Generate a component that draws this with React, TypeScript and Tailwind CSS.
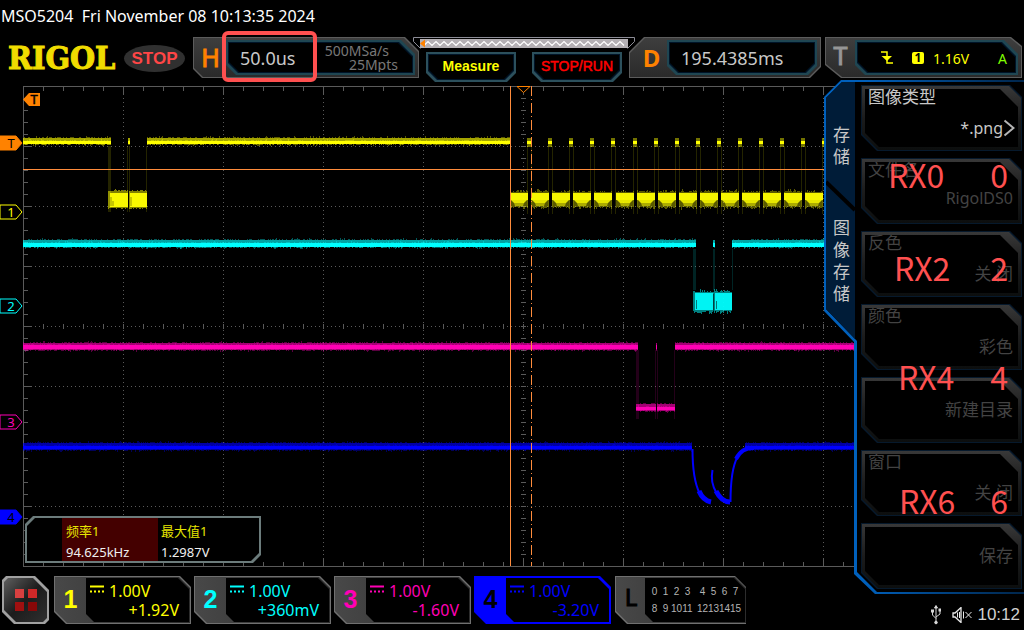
import type { ReactNode } from "react";

const SANS = "font-['Noto_Sans','Noto_Sans_CJK_SC',sans-serif]";
const ARIAL = "font-['Liberation_Sans',Arial,sans-serif]";

/* ---------- deterministic noise helpers for the traces ---------- */

function makeRandom(seed: number) {
  let s = seed;
  return () => {
    s = (s * 1103515245 + 12345) % 2147483648;
    return s / 2147483648;
  };
}

function fuzz(x0: number, x1: number, top: number, bottom: number, reach: number, seed: number) {
  const rnd = makeRandom(seed);
  let d = "";
  for (let x = x0; x < x1; x += 1) {
    const a = Math.round(rnd() * rnd() * reach);
    const b = Math.round(rnd() * rnd() * reach);
    d += `M${x + 0.5} ${top - a}V${bottom + b}`;
  }
  return d;
}

type BandProps = { x0: number; x1: number; y: number; h: number; core: number; coreH: number; color: string; seed: number };

function Band({ x0, x1, y, h, core, coreH, color, seed }: BandProps) {
  return (
    <g>
      <path d={fuzz(x0, x1, y, y + h, 2, seed)} stroke={color} strokeOpacity={0.35} />
      <rect x={x0} y={y} width={x1 - x0} height={h} fill={color} fillOpacity={0.45} />
      <path d={fuzz(x0, x1, core, core + coreH, 2, seed + 7)} stroke={color} strokeOpacity={0.35} />
      <rect x={x0} y={core} width={x1 - x0} height={coreH} fill={color} />
    </g>
  );
}

function Edges({ xs, y0, y1, color }: { xs: number[]; y0: number; y1: number; color: string }) {
  return <path d={xs.map((x) => `M${x + 0.5} ${y0}V${y1}`).join("")} stroke={color} strokeOpacity={0.14} />;
}

/* ---------- graticule ---------- */

function range(n: number) {
  return Array.from({ length: n }, (_, i) => i);
}

function Graticule() {
  const cols = range(9).map((i) => (i + 1) * 100);
  const rows = range(7).map((i) => (i + 1) * 60);
  const xs = range(51).map((i) => i * 20);
  const ys = range(41).map((i) => i * 12);
  return (
    <g stroke="#5a5a5a" fill="none">
      <path d={cols.map((x) => `M${x + 0.5} 0V480`).join("")} strokeDasharray="1 3" />
      <path d={rows.map((y) => `M0 ${y + 0.5}H1000`).join("")} strokeDasharray="1 3" />
      <rect x={0.5} y={0.5} width={1000} height={480} />
      <path d={xs.map((x) => `M${x + 0.5} 0v${x % 100 ? 5 : 8}M${x + 0.5} 480v${x % 100 ? -4 : -7}M${x + 0.5} 238v5`).join("")} />
      <path d={ys.map((y) => `M0 ${y + 0.5}h${y % 60 ? 5 : 8}M498 ${y + 0.5}h5`).join("")} />
    </g>
  );
}

/* ---------- traces ---------- */

const YELLOW = "#ffff00";
const CYAN = "#00ffff";
const MAGENTA = "#ff00b4";
const BLUE = "#0000ff";
const ORANGE = "#ff8c3c";

function TraceOne() {
  const starts = range(15).map((i) => Math.round(487 + i * 21.1));
  return (
    <g>
      <Edges xs={[85, 86, 87, 104, 106, 123]} y0={60} y1={126} color={YELLOW} />
      <Band x0={0} x1={88} y={52} h={6} core={55} coreH={3} color={YELLOW} seed={11} />
      <Band x0={105} x1={107} y={52} h={6} core={55} coreH={3} color={YELLOW} seed={3} />
      <Band x0={124} x1={487} y={52} h={6} core={55} coreH={3} color={YELLOW} seed={29} />
      <path d={fuzz(85, 105, 105, 122, 2, 5)} stroke={YELLOW} strokeOpacity={0.5} />
      <path d={fuzz(106, 124, 105, 122, 2, 6)} stroke={YELLOW} strokeOpacity={0.5} />
      <rect x={87} y={107} width={18} height={14} fill={YELLOW} fillOpacity={0.95} />
      <rect x={107} y={107} width={17} height={14} fill={YELLOW} fillOpacity={0.95} />
      <path d="M88 111v9M108 111v9M90 115v5" stroke="#000" strokeOpacity={0.4} />
      {starts.map((x, i) => (
        <g key={x}>
          <Edges xs={[x + 17, x + 21]} y0={60} y1={128} color={YELLOW} />
          <path d={fuzz(x, x + 18, 106, 121, 3, i * 13 + 5)} stroke={YELLOW} strokeOpacity={0.35} />
          <rect x={x} y={107} width={18} height={7} fill={YELLOW} fillOpacity={0.95} />
          <path d={`M${x + 1} 114h16l-3 3h-10z`} fill={YELLOW} fillOpacity={0.85} />
          <path d={`M${x + 4} 117h10l-1 3h-8z`} fill={YELLOW} fillOpacity={0.5} />
          <rect x={x + 17} y={52} width={4} height={9} fill={YELLOW} fillOpacity={0.45} />
          <rect x={x + 17} y={55} width={4} height={3} fill={YELLOW} />
        </g>
      ))}
    </g>
  );
}

function TraceTwo() {
  return (
    <g>
      <Edges xs={[670, 671, 672, 690, 691, 709]} y0={163} y1={204} color={CYAN} />
      <Band x0={0} x1={673} y={154} h={7} core={157} coreH={4} color={CYAN} seed={41} />
      <Band x0={690} x1={692} y={154} h={7} core={157} coreH={4} color={CYAN} seed={8} />
      <Band x0={709} x1={832} y={154} h={7} core={157} coreH={4} color={CYAN} seed={57} />
      <path d={fuzz(670, 709, 206, 225, 4, 17)} stroke={CYAN} strokeOpacity={0.5} />
      <rect x={672} y={207} width={18} height={17} fill={CYAN} fillOpacity={0.9} />
      <rect x={692} y={207} width={17} height={17} fill={CYAN} fillOpacity={0.9} />
      <path d="M673.5 214v9M690.5 208v18M693.5 215v8" stroke="#000" strokeOpacity={0.5} />
    </g>
  );
}

function TraceThree() {
  return (
    <g>
      <Edges xs={[613, 614, 615, 632, 634, 651]} y0={264} y1={333} color={MAGENTA} />
      <Band x0={0} x1={615} y={257} h={7} core={259} coreH={4} color={MAGENTA} seed={71} />
      <Band x0={633} x1={634} y={257} h={7} core={259} coreH={4} color={MAGENTA} seed={2} />
      <Band x0={652} x1={832} y={257} h={7} core={259} coreH={4} color={MAGENTA} seed={83} />
      <Band x0={613} x1={633} y={318} h={7} core={321} coreH={3} color={MAGENTA} seed={9} />
      <Band x0={634} x1={652} y={318} h={7} core={321} coreH={3} color={MAGENTA} seed={19} />
    </g>
  );
}

function TraceFour() {
  return (
    <g>
      <Band x0={0} x1={669} y={357} h={7} core={360} coreH={3} color={BLUE} seed={91} />
      <Band x0={722} x1={832} y={357} h={7} core={360} coreH={3} color={BLUE} seed={37} />
      <g fill="none" stroke={BLUE} strokeLinejoin="round">
        <path d="M669.5 363c0 22 3 36 7 44" strokeWidth={2} />
        <path d="M676 405c3 7 7 10 12 11" strokeWidth={5} />
        <path d="M689.5 384c-2 10 1 18 4 23" strokeWidth={2} />
        <path d="M693 405c4 8 8 11 14 11" strokeWidth={5} />
        <path d="M707.5 416c0-24 2-36 7-45" strokeWidth={2} />
        <path d="M713 373c4-8 9-11 18-11" strokeWidth={4} />
      </g>
    </g>
  );
}

type MarkerProps = { y: number; label: string; color: string; solid?: boolean };

function Marker({ y, label, color, solid }: MarkerProps) {
  return (
    <g>
      <path d={`M-23 ${y - 7}h16l6 7l-6 7h-16z`} fill={solid ? color : "#000"} stroke={color} />
      <text x={-12} y={y + 5} textAnchor="middle" className={`${SANS} text-[13px]`} fill={solid ? "#000" : color}>
        {label}
      </text>
    </g>
  );
}

function Scope() {
  return (
    <svg
      className="block h-[490px] w-full"
      viewBox="0 0 1024 490"
      preserveAspectRatio="xMinYMin slice"
      role="img"
      aria-label="Waveforms"
    >
      <g transform="translate(23 4)">
        <Graticule />
        <TraceOne />
        <TraceTwo />
        <TraceThree />
        <TraceFour />
        <path d="M0 83.5H1000" stroke={ORANGE} />
        <path d="M487.5 0V480" stroke={ORANGE} />
        <path d="M508.5 0V480" stroke={ORANGE} strokeDasharray="10 3 1 3" />
        <path d="M494 0.5h13l-6.500 6z" fill="#000" stroke="#ff8200" />
        <path d="M0 13.500l6-6.500h11v13h-11z" fill="#ff8200" />
        <text x={11} y={18} textAnchor="middle" className={`${SANS} text-[13px]`} fill="#000" stroke="#000" strokeWidth={0.5}>
          T
        </text>
        <Marker y={57} label="T" color="#ff8200" solid />
        <Marker y={126} label="1" color={YELLOW} />
        <Marker y={220} label="2" color={CYAN} />
        <Marker y={336} label="3" color={MAGENTA} />
        <Marker y={431} label="4" color={BLUE} solid />
      </g>
    </svg>
  );
}

/* ---------- header ---------- */

const CUT_BL_TR_OUT =
  "[clip-path:polygon(0_0,calc(100%-14px)_0,100%_14px,100%_100%,9px_100%,0_calc(100%-9px))]";
const CUT_BL_TR_IN =
  "[clip-path:polygon(0_0,calc(100%-14px)_0,100%_14px,100%_100%,10px_100%,0_calc(100%-10px))]";
const CUT_TL_BR_OUT =
  "[clip-path:polygon(15px_0,100%_0,100%_calc(100%-11px),calc(100%-11px)_100%,0_100%,0_15px)]";
const CUT_BOTTOM =
  "[clip-path:polygon(0_0,100%_0,100%_calc(100%-9px),calc(100%-9px)_100%,9px_100%,0_calc(100%-9px))]";
const CUT_T_OUT =
  "[clip-path:polygon(0_0,calc(100%-11px)_0,100%_9px,100%_100%,16px_100%,0_calc(100%-13px))]";

type HeaderBoxProps = { mark: string; markClass: string; cut: string; innerCut: string; className: string; children: ReactNode };

function HeaderBox({ mark, markClass, cut, innerCut, className, children }: HeaderBoxProps) {
  return (
    <div className={`flex h-[41px] bg-[#5c5c5c] p-px ${cut} ${className}`}>
      <div className={`flex flex-1 bg-linear-to-b from-[#3e3e3e] to-[#2a2a2a] py-[2px] pr-[3px] ${cut}`}>
        <div className={`flex shrink-0 items-center justify-center ${markClass}`}>{mark}</div>
        <div className={`flex flex-1 bg-[#1f4652] p-[2px] ${innerCut}`}>
          <div className={`flex flex-1 bg-[#001428] p-px ${innerCut}`}>
            <div className={`flex flex-1 items-center bg-black ${innerCut}`}>{children}</div>
          </div>
        </div>
      </div>
    </div>
  );
}

function HeaderButton({ children, className }: { children: ReactNode; className: string }) {
  return (
    <button type="button" className={`flex h-[30px] flex-1 bg-[#2c505c] p-[2px] ${CUT_BOTTOM}`}>
      <span className={`flex h-full flex-1 bg-[#001428] p-px ${CUT_BOTTOM}`}>
        <span className={`flex flex-1 items-center justify-center bg-black pb-[2px] text-[14px] ${ARIAL} ${CUT_BOTTOM} ${className}`}>
          {children}
        </span>
      </span>
    </button>
  );
}

function MemoryStrip() {
  const wave = "M0 6" + range(25).map(() => "l4-4l4 4").join("");
  return (
    <svg className="-mx-[6px] block h-[12px] w-[222px]" viewBox="0 0 222 12" aria-hidden="true">
      <path d="M0.500 0.500h221v4l-7 7M0.500 0.500v4l7 7" fill="none" stroke="#8c8c96" />
      <rect x={7} y={2} width={208} height={9} fill="#b4b0b4" />
      <path d={wave} transform="translate(11 2.500)" fill="none" stroke="#fff" strokeWidth={1.2} />
      <path d="M7 6.500l5-4v8z" fill="#ff8200" />
    </svg>
  );
}

function Header() {
  return (
    <header className="flex h-[45px] items-start pl-2 pr-[2px]">
      <div className="w-[116px] shrink-0 font-['DejaVu_Serif_Condensed','DejaVu_Serif',serif] text-[32px] leading-[42px] font-bold text-[#f0dc00] [-webkit-text-stroke:1px_#f0dc00]">
        RIGOL
      </div>
      <div
        className={`mt-2 mr-2 flex h-[27px] w-[61px] shrink-0 items-center justify-center rounded-[50%] bg-[#303030] pt-px text-[17px] font-bold text-[#ff4646] ${ARIAL}`}
      >
        STOP
      </div>
      <div className="relative flex grow basis-[226px]">
        <HeaderBox
          mark="H"
          markClass={`w-8 pl-px text-[25px] text-[#ff8200] [-webkit-text-stroke:1px_#ff8200] ${SANS}`}
          cut={CUT_BL_TR_OUT}
          innerCut={CUT_BL_TR_IN}
          className="flex-1"
        >
          <span className="pt-[2px] pl-[11px] text-[18px] text-[#c8c8c8]">50.0us</span>
          <span className="ml-auto pr-[14px] text-right text-[14px] leading-[14px] text-[#787878]">
            <span className="block pr-[9px]">500MSa/s</span>
            <span className="block">25Mpts</span>
          </span>
        </HeaderBox>
        <div className="absolute -top-[6px] left-[29px] h-[51px] w-[95px] rounded-[6px] border-4 border-[#ff5050]" />
      </div>
      <div className="w-[210px] shrink-0">
        <MemoryStrip />
        <div className="mt-[3px] flex gap-4 px-[7px]">
          <HeaderButton className="font-bold text-[#ffff00]">Measure</HeaderButton>
          <HeaderButton className="text-[#ff0000] [-webkit-text-stroke:0.5px_#ff0000]">STOP/RUN</HeaderButton>
        </div>
      </div>
      <HeaderBox
        mark="D"
        markClass={`w-[37px] pl-[6px] text-[24px] font-bold text-[#ff8200] ${SANS}`}
        cut={CUT_TL_BR_OUT}
        innerCut={CUT_BOTTOM}
        className="mr-1 grow basis-[192px]"
      >
        <span className="pt-[2px] pl-[11px] text-[18px] text-[#c8c8c8]">195.4385ms</span>
      </HeaderBox>
      <HeaderBox
        mark="T"
        markClass={`w-[29px] pb-1 text-[25px] text-[#969696] [-webkit-text-stroke:1px_#969696] ${SANS}`}
        cut={CUT_T_OUT}
        innerCut={CUT_BL_TR_IN}
        className="grow basis-[197px]"
      >
        <span className="flex flex-1 items-center pr-[8px] pl-[23px] text-[14px] text-[#ffff00]">
          <svg className="h-[13px] w-[12px]" viewBox="0 0 12 13" aria-label="Falling edge">
            <path d="M0 1h6v5M6 8v4h6" fill="none" stroke="#ffff00" strokeWidth={1.5} />
            <path d="M0.500 5h10.500l-5 5z" fill="#ffff00" />
          </svg>
          <span className="ml-[19px] flex h-3 w-3 items-center justify-center rounded-[2px] bg-[#ffff00] text-[12px] leading-3 font-bold text-black">
            1
          </span>
          <span className="ml-[9px] pt-px">1.16V</span>
          <span className="ml-auto pt-px text-[#80ff00]">A</span>
        </span>
      </HeaderBox>
    </header>
  );
}

/* ---------- side menu ---------- */

const CARD_OUT =
  "[clip-path:polygon(0_0,calc(100%-12px)_0,100%_12px,100%_100%,16px_100%,0_calc(100%-16px))]";
const CARD_IN =
  "[clip-path:polygon(0_0,calc(100%-18px)_0,100%_18px,100%_100%,14px_100%,0_calc(100%-14px))]";

type Item = { label?: string; value: string; active?: boolean; latin?: boolean };

const ITEMS: Item[] = [
  { label: "图像类型", value: "*.png", active: true, latin: true },
  { label: "文件名", value: "RigolDS0", latin: true },
  { label: "反色", value: "关 闭" },
  { label: "颜色", value: "彩色" },
  { value: "新建目录" },
  { label: "窗口", value: "关 闭" },
  { value: "保存" },
];

function Card({ label, value, active, latin }: Item) {
  const tone = active ? "text-[#c8c8c8]" : "text-[#434343]";
  return (
    <button type="button" className={`flex h-[66px] w-full bg-[#06192c] p-px text-left text-[17px] ${CARD_OUT} ${tone}`}>
      <span className={`flex h-full flex-1 bg-linear-to-b from-[#383838] via-[#1c1c1c] to-[#0c0e0e] p-[3px] ${CARD_OUT}`}>
        <span className={`flex flex-1 flex-col bg-black pr-[5px] pl-[3px] ${label ? "" : "justify-center"} ${CARD_IN}`}>
          {label && <span className="block h-4 leading-4">{label}</span>}
          <span
            className={`flex items-center justify-end leading-5 ${latin ? "text-[16px]" : "text-[17px]"} ${
              label ? (latin && !active ? "mt-[10px]" : "mt-[13px]") : ""
            }`}
          >
            {value}
            {active && (
              <svg className="-mr-[2px] h-[18px] w-[12px]" viewBox="0 0 12 18" aria-hidden="true">
                <path d="M1.500 1.500l9 7.500l-9 7.500" fill="none" stroke="#b4b4b4" strokeWidth={2} />
              </svg>
            )}
          </span>
        </span>
      </span>
    </button>
  );
}

const PANEL_OUT =
  "[clip-path:polygon(0_17px,17px_0,100%_0,100%_100%,51px_100%,30px_calc(100%-20px),30px_262px,0_231px)]";
const PANEL_IN =
  "[clip-path:polygon(2px_18px,18px_2px,100%_2px,100%_calc(100%-2px),53px_calc(100%-2px),33px_calc(100%-22px),33px_261px,2px_229px)]";
const TAB_FILL =
  "[clip-path:polygon(2px_18px,18px_2px,100%_2px,100%_259px,2px_229px)]";

const NOTES = [
  { name: "RX0", n: "0", place: "top-[78px] left-[64px]" },
  { name: "RX2", n: "2", place: "top-[171px] left-[70px]" },
  { name: "RX4", n: "4", place: "top-[280px] left-[74px]" },
  { name: "RX6", n: "6", place: "top-[404px] left-[75px]" },
];

function SidePanel() {
  return (
    <aside className="relative z-10 col-start-1 row-start-1 -mt-[2px] flex w-[200px] flex-col justify-self-end">
      <div className="relative flex pt-[5px] pr-[2px] pb-[5px]">
        <div className={`absolute inset-0 bg-linear-to-r from-[#0060bc] from-20% to-[#00264c] ${PANEL_OUT}`} />
        <div className={`absolute inset-0 bg-black ${PANEL_IN}`} />
        <div className={`absolute inset-y-0 left-0 w-[31px] bg-[#001c38] ${TAB_FILL}`} />
        <svg className="absolute top-[100px] left-[2px] h-[32px] w-[29px]" viewBox="0 0 29 32" aria-hidden="true">
          <path d="M0 2L29 30" stroke="#000" strokeWidth={4} />
        </svg>
        <nav className="relative flex w-[37px] shrink-0 flex-col pl-[9px] text-[17px] leading-[22px] text-[#c8c8c8]">
          <a href="#storage" className="mt-[39px] block w-[17px]">
            存储
          </a>
          <a href="#image-storage" className="mt-[49px] block w-[17px]">
            图像存储
          </a>
        </nav>
        <div className="relative flex flex-1 flex-col gap-[7px]">
          {ITEMS.map((item, i) => (
            <Card key={i} {...item} />
          ))}
        </div>
        {NOTES.map((note) => (
          <div key={note.name} className={`absolute right-4 flex justify-between font-['Noto_Sans_CJK_SC',sans-serif] text-[32px] leading-8 text-[#ff5050] ${note.place}`}>
            <span>{note.name}</span>
            <span>{note.n}</span>
          </div>
        ))}
      </div>
      <div className="mt-[9px] flex items-center justify-end gap-2 pr-1 text-[#d0d0d0]">
        <svg className="mr-[3px] h-5 w-[10px]" viewBox="0 0 10 20" fill="none" stroke="#d8d8d8" aria-label="USB">
          <path d="M5 1v16M1.500 6v4l3.500 3.500M9 5v4L5 12" />
          <path d="M3.500 3L5 0.500L6.500 3z" fill="#d8d8d8" />
          <circle cx={5} cy={17.500} r={1.300} fill="#d8d8d8" />
          <rect x={0.500} y={5} width={2} height={2} fill="#d8d8d8" />
          <rect x={8} y={4} width={1.500} height={2} fill="#d8d8d8" />
        </svg>
        <svg className="-mr-[3px] h-4 w-5" viewBox="0 0 20 16" fill="none" stroke="#e8e8e8" aria-label="Muted">
          <path d="M1 6v4h2l6 5.500V0.500L3 6z" strokeWidth={1.300} />
          <path d="M11.500 4.500v7M5.500 5.500v5M7.500 5v6M13.500 5l6 6M19.500 5l-6 6" />
        </svg>
        <time className={`text-[17px] leading-6 ${ARIAL}`}>10:12</time>
      </div>
    </aside>
  );
}

/* ---------- measurements and channel bar ---------- */

const BOX_TL_BR =
  "[clip-path:polygon(8px_0,100%_0,100%_calc(100%-8px),calc(100%-8px)_100%,0_100%,0_8px)]";

function Measurements() {
  return (
    <div className={`absolute bottom-[9px] left-[25px] flex h-[47px] w-[236px] bg-[#6c7c7c] p-[2px] ${BOX_TL_BR}`}>
      <dl className={`flex flex-1 bg-black pl-[35px] text-[13px] leading-[21px] ${BOX_TL_BR}`}>
        <div className="w-24 bg-[#440000] pt-[3px] pl-1">
          <dt className="text-[#e6e600]">频率1</dt>
          <dd className="text-[#f0f0f0]">94.625kHz</dd>
        </div>
        <div className="pt-[3px] pl-[3px]">
          <dt className="text-[#e6e600]">最大值1</dt>
          <dd className="text-[#f0f0f0]">1.2987V</dd>
        </div>
      </dl>
    </div>
  );
}

const CH_OUT =
  "[clip-path:polygon(0_0,calc(100%-11px)_0,100%_11px,100%_100%,12px_100%,0_calc(100%-12px))]";
const CH_IN =
  "[clip-path:polygon(0_0,calc(100%-11px)_0,100%_11px,100%_100%,8px_100%,0_calc(100%-8px))]";

type Channel = { id: string; scale: string; offset: string; tone: string; idTone: string; rim: string; fill: string };

const GREY_FILL = "bg-linear-to-r from-[#484848] to-[#2c2c2c]";

const CHANNELS: Channel[] = [
  { id: "1", scale: "1.00V", offset: "+1.92V", tone: "text-[#ffff00]", idTone: "text-[#ffff00]", rim: "bg-[#707070]", fill: GREY_FILL },
  { id: "2", scale: "1.00V", offset: "+360mV", tone: "text-[#00ffff]", idTone: "text-[#00ffff]", rim: "bg-[#707070]", fill: GREY_FILL },
  { id: "3", scale: "1.00V", offset: "-1.60V", tone: "text-[#ff00b4]", idTone: "text-[#ff00b4]", rim: "bg-[#707070]", fill: GREY_FILL },
  { id: "4", scale: "1.00V", offset: "-3.20V", tone: "text-[#0000ff]", idTone: "text-black", rim: "bg-[#0000ff]", fill: "bg-[#0000ff]" },
];

function ChannelButton({ id, scale, offset, tone, idTone, rim, fill }: Channel) {
  return (
    <button type="button" className={`flex h-12 w-[137px] p-px text-left ${rim} ${CH_OUT}`}>
      <span className={`flex h-full flex-1 py-px pr-px ${fill} ${CH_OUT}`}>
        <span className={`flex w-[31px] items-center justify-center text-[25px] font-bold ${ARIAL} ${idTone}`}>{id}</span>
        <span className={`flex flex-1 flex-col justify-center bg-black pt-[2px] pr-[10px] pl-1 text-[16px] leading-[19px] ${CH_IN} ${tone}`}>
          <span className="flex items-center gap-[5px]">
            <svg className="mb-[5px] h-2 w-[14px]" viewBox="0 0 14 8" stroke="currentColor" aria-label="DC coupling">
              <path d="M0 1.500h14" strokeWidth={2} />
              <path d="M0 6.500h14" strokeDasharray="2 2" strokeWidth={2} />
            </svg>
            {scale}
          </span>
          <span className="text-right">{offset}</span>
        </span>
      </span>
    </button>
  );
}

const LOGIC_ROWS = [
  ["0", "1", "2", "3", "4", "5", "6", "7"],
  ["8", "9", "10", "11", "12", "13", "14", "15"],
];

function LogicButton() {
  return (
    <button type="button" className={`ml-px flex h-12 w-[131px] bg-[#707070] p-px ${CH_OUT}`}>
      <span className={`flex h-full flex-1 py-px pr-px ${GREY_FILL} ${CH_OUT}`}>
        <span className={`flex w-[29px] items-center justify-center pb-[6px] pl-px text-[24px] text-black [-webkit-text-stroke:1px_#000] ${SANS}`}>L</span>
        <span className={`flex flex-1 flex-col justify-center bg-black px-1 text-[10px] leading-[17px] text-[#b4b4b4] ${ARIAL} ${CH_IN}`}>
          {LOGIC_ROWS.map((row) => (
            <span key={row[0]} className="flex">
              {row.map((n, i) => (
                <span key={n} className={`w-[11px] text-center ${i === 4 ? "ml-1" : ""}`}>
                  <span className="-mx-1">{n}</span>
                </span>
              ))}
            </span>
          ))}
        </span>
      </span>
    </button>
  );
}

const MENU_CUT =
  "[clip-path:polygon(4px_0,calc(100%-14px)_0,100%_14px,100%_calc(100%-4px),calc(100%-4px)_100%,12px_100%,0_calc(100%-12px),0_4px)]";

function MenuButton() {
  return (
    <button type="button" aria-label="Menu" className={`mr-[2px] flex h-12 w-[47px] bg-[#a0a0a0] p-[2px] ${MENU_CUT}`}>
      <span className={`grid h-full flex-1 grid-cols-[9px_9px] place-content-center gap-1 bg-linear-to-br from-[#606060] via-[#1c1c1c] to-[#303030] ${MENU_CUT}`}>
        <span className="h-[9px] bg-[#d84040]" />
        <span className="h-[9px] bg-[#d02828]" />
        <span className="h-[9px] bg-[#a01010]" />
        <span className="h-[9px] bg-[#880808]" />
      </span>
    </button>
  );
}

export default function App() {
  return (
    <div className={`min-h-screen overflow-hidden bg-black ${SANS}`}>
      <h1 className="h-[37px] pl-px text-[16px] leading-8 whitespace-pre text-white">
        {"MSO5204  Fri November 08 10:13:35 2024"}
      </h1>
      <Header />
      <main className="grid">
        <div className="col-start-1 row-start-1 min-w-0">
          <div className="relative">
            <Scope />
            <Measurements />
          </div>
          <div className="mt-1 flex gap-[3px] pl-[2px]">
            <MenuButton />
            {CHANNELS.map((c) => (
              <ChannelButton key={c.id} {...c} />
            ))}
            <LogicButton />
          </div>
        </div>
        <SidePanel />
      </main>
    </div>
  );
}
